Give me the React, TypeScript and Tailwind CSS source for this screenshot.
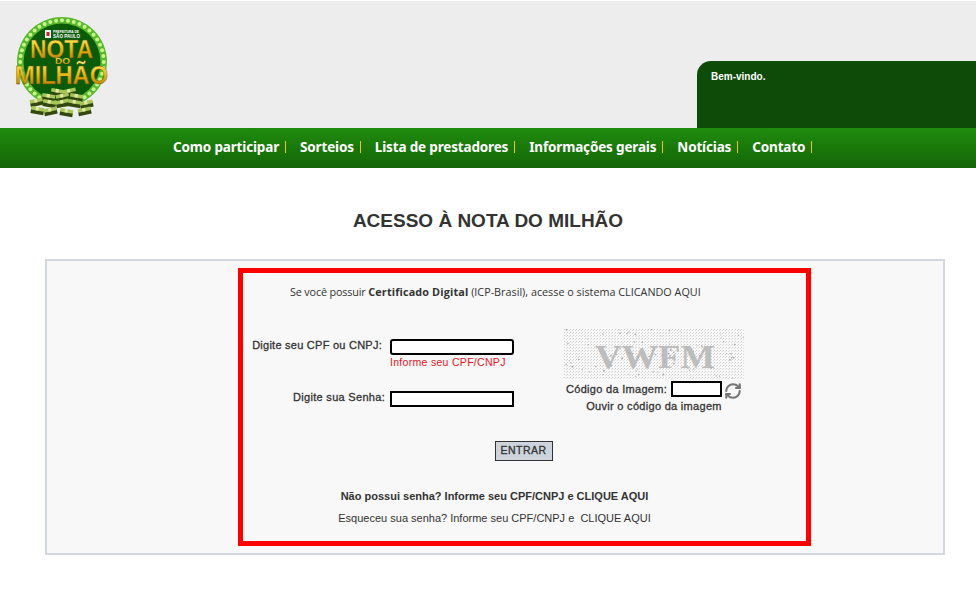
import React from "react";
import { RefreshCw } from "lucide-react";

const menus = ["Como participar", "Sorteios", "Lista de prestadores", "Informações gerais", "Notícias", "Contato"];

function seeded(n: number) {
  const out: number[] = [];
  let v = 17;
  for (let i = 0; i < n; i++) {
    v = (v * 1103 + 12345) % 65536;
    out.push(v / 65536);
  }
  return out;
}

function Logo() {
  const dots = Array.from({ length: 44 }, (_, i) => (i / 44) * Math.PI * 2);
  const bundles = [
    [57, 91], [69, 91], [48, 96], [62, 96], [76, 96], [36, 101], [49, 102], [62, 102],
    [74, 102], [86, 103], [37, 109], [50, 110], [66, 111], [84, 110],
  ];
  return (
    <svg width="104" height="106" viewBox="12 13 104 106" className="ml-3 mt-[13px] shrink-0">
      <defs>
        <linearGradient id="gold" x1="0" y1="0" x2="0" y2="1">
          <stop offset="0" stopColor="#fff27a" />
          <stop offset="0.5" stopColor="#e8b90f" />
          <stop offset="1" stopColor="#a86f06" />
        </linearGradient>
      </defs>
      <circle cx="62" cy="61" r="45" fill="#58b82e" />
      <circle cx="62" cy="61" r="38.5" fill="#0b5c0a" />
      {dots.map((a, i) => (
        <circle key={i} cx={62 + 41.8 * Math.cos(a)} cy={61 + 41.8 * Math.sin(a)} r="2" fill="#c9f58d" />
      ))}
      <rect x="45" y="29" width="6" height="8" fill="#f4f4f4" />
      <rect x="46.5" y="31" width="3" height="4" fill="#c0252a" />
      <text x="53" y="32" textLength="26" lengthAdjust="spacingAndGlyphs" fontSize="3.5" fontWeight="700" fill="#fff" fontFamily="Liberation Sans, sans-serif">PREFEITURA DE</text>
      <text x="53" y="37" textLength="27" lengthAdjust="spacingAndGlyphs" fontSize="5" fontWeight="700" fill="#fff" fontFamily="Liberation Sans, sans-serif">SÃO PAULO</text>
      <text x="30" y="57" textLength="63" lengthAdjust="spacingAndGlyphs" fontSize="25" fontWeight="700" fill="url(#gold)" stroke="#6e4a05" strokeWidth="0.4" fontFamily="Liberation Sans, sans-serif">NOTA</text>
      <text x="55" y="63" textLength="15" lengthAdjust="spacingAndGlyphs" fontSize="9.5" fontWeight="700" fill="url(#gold)" fontFamily="Liberation Sans, sans-serif">DO</text>
      <text x="15" y="83" textLength="93" lengthAdjust="spacingAndGlyphs" fontSize="25" fontWeight="700" fill="url(#gold)" stroke="#6e4a05" strokeWidth="0.4" fontFamily="Liberation Sans, sans-serif">MILHÃO</text>
      {bundles.map(([x, y], i) => (
        <g key={i} transform={`rotate(${i % 2 ? -12 : 10} ${x} ${y})`}>
          <rect x={x - 6} y={y - 1} width="13" height="5" fill="#33480f" />
          <rect x={x - 6} y={y - 3} width="13" height="3.5" fill="#a9c65a" />
          <rect x={x - 1.5} y={y - 3} width="3" height="3.5" fill="#dfeaa6" />
        </g>
      ))}
    </svg>
  );
}

function Captcha() {
  const r = seeded(270);
  const specks = Array.from({ length: 90 }, (_, i) => [r[i * 3] * 180, r[i * 3 + 1] * 50, 0.4 + r[i * 3 + 2] * 0.6]);
  return (
    <svg width="180" height="50" viewBox="0 0 180 50" className="block">
      <defs>
        <pattern id="dither" width="3" height="3" patternUnits="userSpaceOnUse">
          <rect x="0" y="0" width="1" height="1" fill="#cfcfcf" />
          <rect x="2" y="1" width="1" height="1" fill="#dcdcdc" />
        </pattern>
      </defs>
      <rect width="180" height="50" fill="#f8f8f8" />
      <rect width="180" height="50" fill="url(#dither)" />
      <text x="31" y="39" textLength="120" lengthAdjust="spacingAndGlyphs" fontSize="34" fontWeight="700" fill="#bdbdbd" fontFamily="Liberation Serif, serif">VWFM</text>
      {specks.map(([x, y, s], i) => (
        <circle key={i} cx={x} cy={y} r={s} fill="#a8a8a8" />
      ))}
    </svg>
  );
}

export default function App() {
  return (
    <div className="w-[976px] min-h-[600px] bg-white font-['Liberation_Sans',sans-serif] overflow-hidden">
      <div className="h-[128px] bg-[#ededed] flex justify-between items-start border-t border-white">
        <Logo />
        <div className="w-[279px] h-[67px] mt-[60px] bg-[#0e4a08] rounded-tl-[14px] pl-3.5 pt-[9px] text-[10px] leading-[14px] font-bold text-white">
          Bem-vindo.
        </div>
      </div>

      <div className="h-[40px] pb-[2px] bg-gradient-to-b from-[#1f8c0d] to-[#146508] flex items-center pl-[173px] font-['Noto_Sans',sans-serif] font-bold text-[13.5px] tracking-[-0.16px] text-white">
        {menus.map((m) => (
          <div key={m} className="flex items-center mr-[14px]">
            <span className="whitespace-nowrap">{m}</span>
            <span className="ml-[6px] w-px h-[12px] bg-[#f0c030]" />
          </div>
        ))}
      </div>

      <h1 className="mt-[41px] text-center text-[19px] leading-[24px] font-bold text-[#333]">ACESSO À NOTA DO MILHÃO</h1>

      <div className="mt-[26px] ml-[45px] w-[900px] h-[296px] border-2 border-[#d3d7e0] bg-[#f8f8f8] pt-[7px] pl-[191px]">
        <div className="w-[573px] h-[278px] border-[5px] border-[#ff0000] text-[#333]">
          <p className="pt-[12px] pl-[47px] font-['Open_Sans',sans-serif] text-[10.8px] leading-[14px] whitespace-nowrap">
            <span className="tracking-[-0.15px]">Se você possuir </span>
            <b className="tracking-[0.15px]">Certificado Digital</b> (ICP-Brasil), acesse o sistema CLICANDO AQUI
          </p>

          <div className="flex mt-[31px] h-[84px]">
            <div className="w-[271px] pt-[9px] text-[11px] [-webkit-text-stroke:0.3px]">
              <div className="flex">
                <label className="w-[139px] text-right tracking-[0.25px] leading-[12px] whitespace-nowrap">Digite seu CPF ou CNPJ:</label>
                <div className="ml-[8px]">
                  <input className="block w-[124px] h-[16px] bg-white border-2 border-black rounded-[3px]" />
                  <div className="text-[10.5px] leading-[14px] [-webkit-text-stroke:0px] text-[#ee1122] tracking-[0.3px] whitespace-nowrap">Informe seu CPF/CNPJ</div>
                </div>
              </div>
              <div className="flex mt-[22px]">
                <label className="w-[142px] text-right tracking-[0.3px] leading-[12px] whitespace-nowrap">Digite sua Senha:</label>
                <input className="ml-[5px] block w-[124px] h-[16px] bg-white border-2 border-black" />
              </div>
            </div>
            <div className="w-[180px] ml-[50px] -mt-[1px] text-[11px] [-webkit-text-stroke:0.3px]">
              <Captcha />
              <div className="flex items-start mt-[2px] pl-[2px] tracking-[0.3px] whitespace-nowrap">
                <span className="leading-[16px]">Código da Imagem:</span>
                <input className="ml-[4px] w-[51px] h-[16px] shrink-0 bg-white border-2 border-black" />
                <RefreshCw size={18} strokeWidth={2.8} className="ml-[2px] mt-[1px] text-[#777]" />
              </div>
              <div className="-mt-[1px] text-center leading-[14px] tracking-[0.3px] whitespace-nowrap">Ouvir o código da imagem</div>
            </div>
          </div>

          <div className="flex justify-center mt-[27px] pr-[2px]">
            <button className="w-[58px] h-[20px] bg-[#ced4dc] border border-[#333] text-[10.5px] [-webkit-text-stroke:0.3px] tracking-[0.5px] text-[#333]">ENTRAR</button>
          </div>

          <p className="mt-[28px] text-center text-[11px] leading-[14px] font-bold pr-[60px] whitespace-nowrap">Não possui senha? Informe seu CPF/CNPJ e CLIQUE AQUI</p>
          <p className="mt-[8px] text-center text-[11px] leading-[14px] pr-[60px] whitespace-pre">Esqueceu sua senha? Informe seu CPF/CNPJ e  CLIQUE AQUI</p>
        </div>
      </div>
    </div>
  );
}
